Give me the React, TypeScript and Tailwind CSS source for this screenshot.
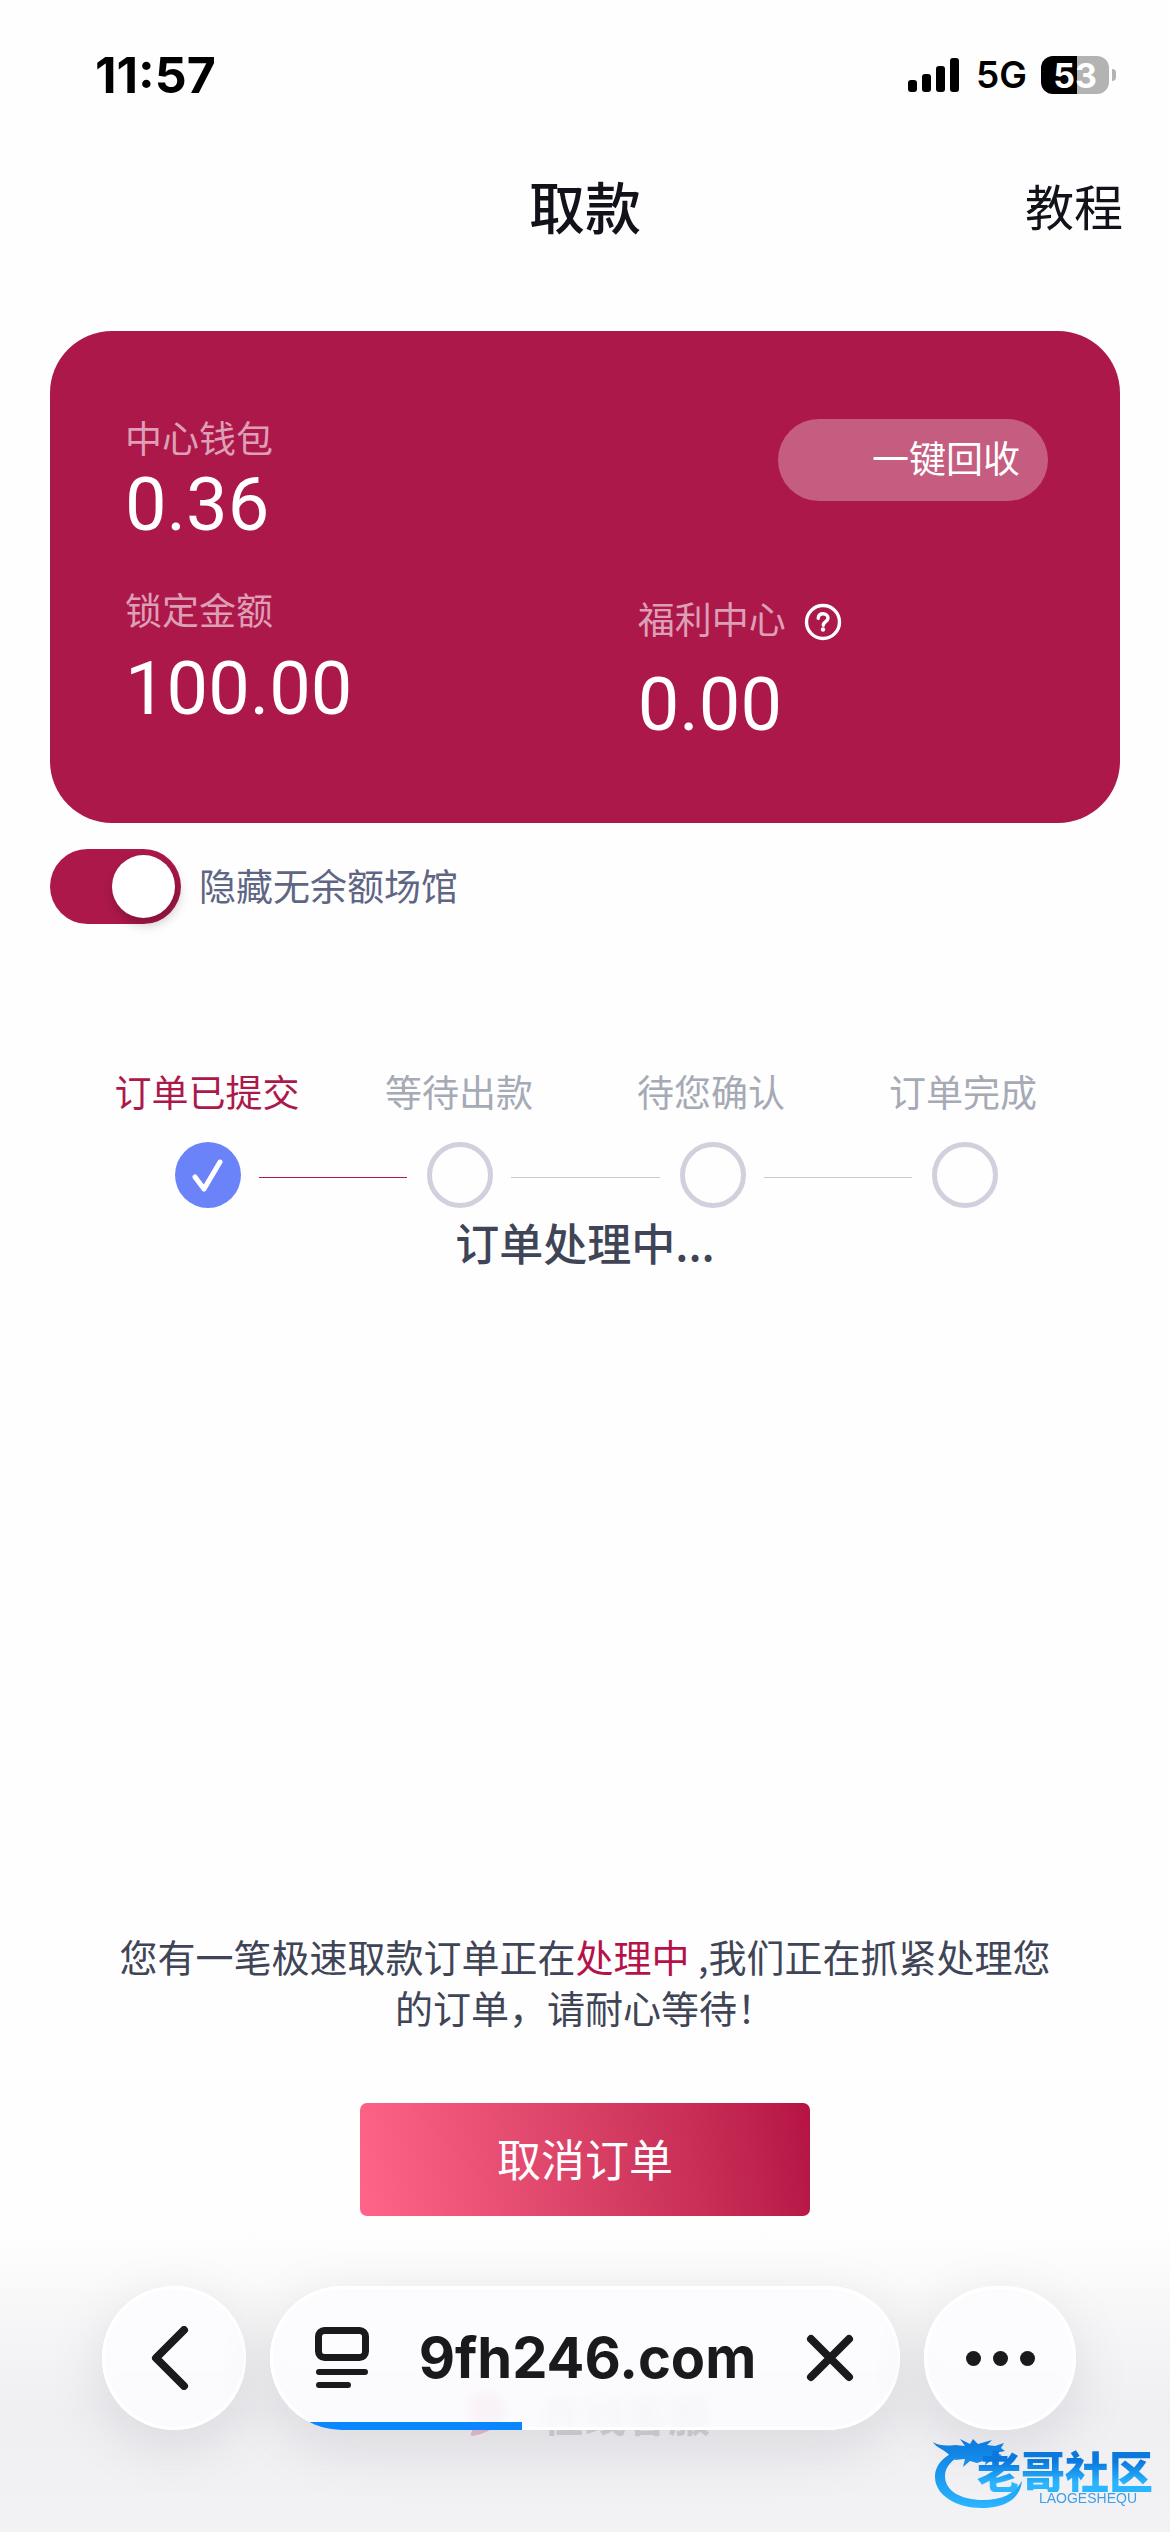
import { useState } from "react";

const STEPS = ["订单已提交", "等待出款", "待您确认", "订单完成"];
const CURRENT = 0;

function StatusBar() {
  return (
    <div className="flex h-[150px] items-center justify-between pl-[95px] pr-[54px] font-['Inter',sans-serif] text-black">
      <time className="text-[50px] font-bold">11:57</time>
      <div className="flex items-center">
        <svg width="52" height="34" viewBox="0 0 52 34" aria-hidden="true">
          <rect x="0" y="22" width="9" height="12" rx="3" />
          <rect x="14" y="16" width="9" height="18" rx="3" />
          <rect x="28" y="8" width="9" height="26" rx="3" />
          <rect x="42" y="0" width="9" height="34" rx="3" />
        </svg>
        <span className="ml-4 text-[37px] font-semibold">5G</span>
        <span className="ml-[14px] flex h-[38px] w-[68px] items-center justify-center rounded-xl bg-linear-to-r from-black from-53% to-[#b3b3b3] to-53% text-[34px] font-bold text-white">53</span>
        <span className="ml-[3px] h-3 w-1 rounded-r-full bg-[#b3b3b3]"></span>
      </div>
    </div>
  );
}

function Amount({ label, value, help }: { label: string; value: string; help?: boolean }) {
  return (
    <>
      <dt className="flex items-center gap-[18px] text-[37px] leading-[44px] text-[#dd9fb5]">
        {label}
        {help && (
          <button type="button" aria-label="说明" className="mt-2">
            <svg width="38" height="38" viewBox="0 0 38 38" fill="none" stroke="#fff" strokeLinecap="round">
              <circle cx="19" cy="19" r="16.5" strokeWidth="3.4" />
              <path d="M14.2 15.2c.3-2.8 2.2-4.4 4.9-4.4 2.8 0 4.9 1.7 4.9 4.2 0 3.6-4.7 3.7-4.7 7.2" strokeWidth="3.4" />
              <circle cx="19" cy="26.5" r="2.2" fill="#fff" stroke="none" />
            </svg>
          </button>
        )}
      </dt>
      <dd className="font-['Roboto',sans-serif] text-[74px] leading-[84px] text-white">{value}</dd>
    </>
  );
}

function StepDot({ done }: { done: boolean }) {
  if (!done) return <span className="size-[66px] shrink-0 rounded-full border-[5px] border-[#d1d0dc]"></span>;
  return (
    <span className="flex size-[66px] shrink-0 items-center justify-center rounded-full bg-[#6a83f8]">
      <svg width="36" height="36" viewBox="0 0 36 36" fill="none" stroke="#fff" strokeWidth="5" strokeLinecap="round" strokeLinejoin="round" aria-hidden="true">
        <path d="M5 20l9 12L30 5" />
      </svg>
    </span>
  );
}

function Watermark() {
  return (
    <div className="absolute right-[17px] bottom-7 z-20 flex h-[70px] w-[222px] flex-col items-end justify-end">
      <svg className="absolute top-0 left-0" width="92" height="76" viewBox="0 0 92 76" aria-hidden="true">
        <defs>
          <linearGradient id="dragon" gradientUnits="userSpaceOnUse" x1="0" y1="4" x2="0" y2="74">
            <stop offset="0" stopColor="#0b78dd" />
            <stop offset="1" stopColor="#2bb5ff" />
          </linearGradient>
        </defs>
        <g fill="url(#dragon)">
          <path d="M38 14C18 17 4 28 4 43c0 18 21 31 47 31 23 0 38-9 40-27-8 13-20 19-39 19-22 0-38-9-38-24 0-10 8-18 22-23z" />
          <path d="M2 8c6 4 14 4 22 3l10 1-5-7 10 5 3-5 5 5 14-4-5 5 8 1 9-3-3 5 4 3-9 2 6 2-5 3 4 3-9-1-7 5 1-5-9 3-7-2-7 6 2-8-11 1 5-5-9 1C15 16 5 14 2 8z" />
        </g>
      </svg>
      <strong className="relative bg-linear-to-b from-[#0b78dd] from-30% to-[#2bb5ff] to-80% bg-clip-text text-[44px] leading-[44px] font-black text-transparent">老哥社区</strong>
      <small className="relative mr-4 font-['Liberation_Sans',sans-serif] text-[14px] leading-[12px] text-[#3f9fe8]">LAOGESHEQU</small>
    </div>
  );
}

function BrowserBar() {
  const glass = "h-[144px] rounded-[72px] bg-[#fdfdff]/85 backdrop-blur-[6px] shadow-[inset_0_0_0_3px_#fff,0_16px_60px_rgba(20,20,40,0.10)]";
  return (
    <nav className="fixed inset-x-0 bottom-0 z-10 flex gap-6 bg-linear-to-b from-[#e9e9ed]/0 from-15% via-[#e9e9ed]/70 via-65% to-[#f1f1f4]/90 pt-[106px] pr-[94px] pb-[102px] pl-[102px] text-[#1a1a1c]">
      <button type="button" aria-label="返回" className={"flex w-[144px] items-center justify-center " + glass}>
        <svg className="mr-2" width="38" height="64" viewBox="0 0 38 64" fill="none" stroke="currentColor" strokeWidth="8" strokeLinecap="round" strokeLinejoin="round">
          <path d="M33 4L5 32l28 28" />
        </svg>
      </button>
      <div className={"relative flex flex-1 items-center justify-between overflow-hidden pr-[46px] pl-[45px] " + glass}>
        <button type="button" aria-label="页面菜单">
          <svg width="54" height="62" viewBox="0 0 54 62" fill="none" stroke="currentColor" strokeWidth="7" strokeLinecap="round">
            <rect x="3.5" y="3.5" width="47" height="27" rx="6" />
            <path d="M4 45h46M4 58h29" strokeWidth="6" />
          </svg>
        </button>
        <button type="button" className="font-['Inter',sans-serif] text-[56px] font-bold">9fh246.com</button>
        <button type="button" aria-label="停止载入">
          <svg width="48" height="48" viewBox="0 0 48 48" fill="none" stroke="currentColor" strokeWidth="8" strokeLinecap="round">
            <path d="M5 5l38 38M43 5L5 43" />
          </svg>
        </button>
        <span className="absolute bottom-0 left-0 h-2 w-[40%] bg-[#0a87ff]"></span>
      </div>
      <button type="button" aria-label="更多" className={"flex w-[152px] items-center justify-center gap-3 " + glass}>
        <i className="size-[15px] rounded-full bg-current"></i>
        <i className="size-[15px] rounded-full bg-current"></i>
        <i className="size-[15px] rounded-full bg-current"></i>
      </button>
    </nav>
  );
}

export default function App() {
  const [hideEmpty, setHideEmpty] = useState(true);
  return (
    <div className="relative flex min-h-screen flex-col bg-[#fefefe] font-['Noto_Sans_CJK_SC',sans-serif]">
      <StatusBar />
      <header className="grid h-[110px] grid-cols-3 items-center px-[47px] text-[#12131a]">
        <h1 className="col-start-2 text-center text-[56px] leading-[60px] font-medium">取款</h1>
        <a href="#help" className="justify-self-end text-[49px] leading-[60px]">教程</a>
      </header>

      <main className="flex flex-1 flex-col">
        <section className="mx-[50px] mt-[71px] grid grid-cols-[5fr_4fr] rounded-[62px] bg-[#ac184a] pt-[84px] pr-[72px] pb-[76px] pl-[75px]">
          <dl className="flex flex-col gap-1"><Amount label="中心钱包" value="0.36" /></dl>
          <button type="button" className="mt-1 h-[82px] w-[270px] justify-self-end rounded-full bg-white/30 pr-7 pb-1 text-right text-[37px] text-white">一键回收</button>
          <dl className="mt-10 flex flex-col gap-4"><Amount label="锁定金额" value="100.00" /></dl>
          <dl className="mt-12 flex flex-col gap-[22px]"><Amount label="福利中心" value="0.00" help /></dl>
        </section>

        <div className="mx-[50px] mt-[26px] flex items-center gap-[18px]">
          <input id="hide-empty" type="checkbox" role="switch" checked={hideEmpty} onChange={(e) => setHideEmpty(e.target.checked)}
            className="h-[75px] w-[131px] appearance-none rounded-full bg-gray-300 p-[6px] before:block before:size-[63px] before:rounded-full before:bg-white before:shadow-[3px_6px_12px_rgba(0,0,0,0.25)] before:content-[''] checked:bg-[#ac184a] checked:before:ml-auto" />
          <label htmlFor="hide-empty" className="pb-1 text-[37px] leading-[44px] text-[#5f6684]">隐藏无余额场馆</label>
        </div>

        <ol className="mx-[81px] mt-[145px] grid grid-cols-4 text-center text-[37px] leading-[44px]">
          {STEPS.map((s, i) => <li key={s} className={i <= CURRENT ? "text-[#ac184a]" : "text-[#a5aab5]"}>{s}</li>)}
        </ol>
        <div className="mr-[172px] ml-[175px] mt-[29px] flex items-center">
          {STEPS.map((s, i) => (
            <div key={s} className={"flex items-center " + (i < STEPS.length - 1 ? "flex-1" : "")}>
              <StepDot done={i <= CURRENT} />
              {i < STEPS.length - 1 && <span className={"mt-1 mr-5 ml-[18px] h-px flex-1 " + (i <= CURRENT ? "bg-[#b0184e]" : "bg-[#c5cbd9]")}></span>}
            </div>
          ))}
        </div>
        <h2 className="mt-1 text-center text-[44px] leading-[60px] font-medium text-[#3f4556]">订单处理中...</h2>

        <div className="flex-1"></div>

        <p className="px-[110px] text-center text-[38px] leading-[51px] text-[#3f4556]">
          您有一笔极速取款订单正在<span className="text-[#b5124a]">处理中</span> ,我们正在抓紧处理您的订单，请耐心等待！
        </p>
        <button type="button" className="mt-[71px] h-[113px] w-[450px] self-center rounded-[7px] bg-linear-80 from-[#ff6589] to-[#b51345] pb-1 text-[44px] text-white">取消订单</button>
        <a href="#service" className="mt-[168px] mb-[88px] flex items-center gap-9 self-center pl-2 text-[42px] leading-[60px] font-bold text-[#8d89a0]">
          <svg width="38" height="46" viewBox="0 0 38 46" fill="#d9376f" aria-hidden="true">
            <path d="M19 2c11 0 19 6 19 15 0 14-16 25-33 28-2 0-3-1-2-3l6-11C3 28 0 23 0 17 0 8 8 2 19 2z" />
          </svg>
          在线客服
        </a>
      </main>
      <BrowserBar />
      <Watermark />
    </div>
  );
}
